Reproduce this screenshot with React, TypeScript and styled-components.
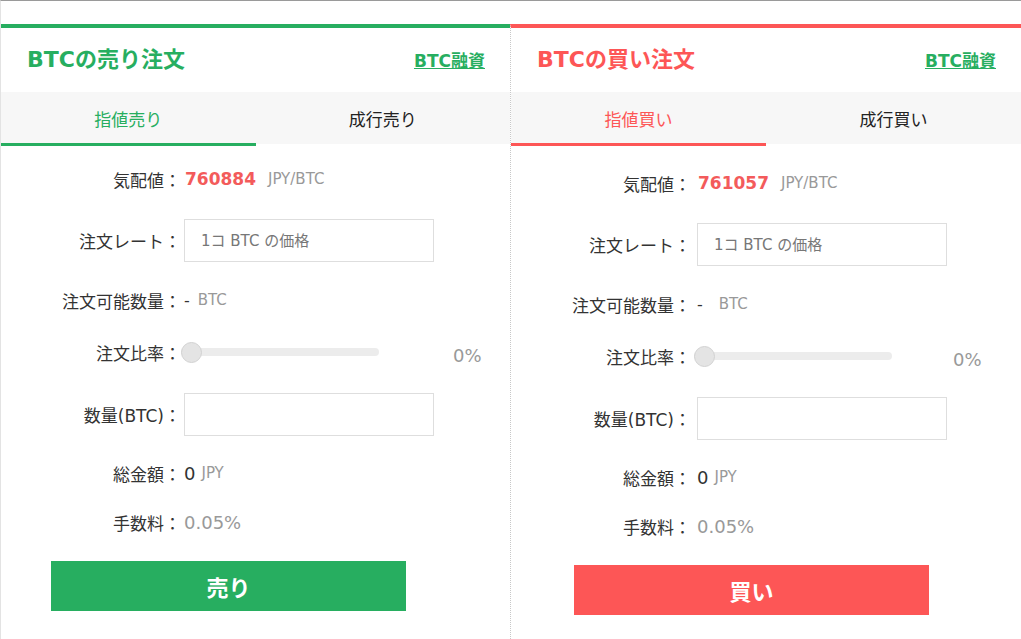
import React from 'react';
import styled, { createGlobalStyle, css } from 'styled-components';

const GREEN = '#27ae60';
const RED = '#fd5656';

type Side = 'sell' | 'buy';

const Global = createGlobalStyle`
  html, body { margin: 0; padding: 0; background: #fff; }
  body {
    font-family: "DejaVu Sans", "Noto Sans CJK JP", sans-serif;
    color: #333;
  }
  * { box-sizing: border-box; }
`;

const Page = styled.div`
  width: 1021px;
  height: 639px;
  overflow: hidden;
  border-top: 1px solid #9a9a9a;
  border-left: 1px solid #e3e3e3;
  padding-top: 23px;
  display: grid;
  grid-template-columns: 509px 511px;
`;

const Panel = styled.section<{ $side: Side }>`
  border-top: 4px solid ${(p) => (p.$side === 'sell' ? GREEN : RED)};
  ${(p) =>
    p.$side === 'buy' &&
    css`
      border-left: 1px dotted #c8c8c8;
    `}
  display: flex;
  flex-direction: column;
`;

const Header = styled.header`
  height: 64px;
  display: flex;
  align-items: center;
  justify-content: space-between;
  padding: 0 25px 7px 26px;
`;

const Title = styled.h2<{ $side: Side }>`
  margin: 0;
  font-size: 22px;
  font-weight: bold;
  color: ${(p) => (p.$side === 'sell' ? GREEN : RED)};
`;

const Link = styled.a`
  font-size: 17px;
  font-weight: bold;
  color: ${GREEN};
  text-decoration: underline;
  margin-top: 5px;
`;

const Tabs = styled.nav`
  height: 52px;
  display: flex;
  background: #f7f7f7;
`;

const Tab = styled.div<{ $active?: boolean; $side: Side }>`
  flex: 1;
  position: relative;
  display: flex;
  align-items: center;
  justify-content: center;
  font-size: 17px;
  color: ${(p) => (p.$active ? (p.$side === 'sell' ? GREEN : RED) : '#222')};
  ${(p) =>
    p.$active &&
    css`
      &::after {
        content: '';
        position: absolute;
        left: 0;
        right: 0;
        bottom: -2px;
        height: 3px;
        background: ${p.$side === 'sell' ? GREEN : RED};
      }
    `}
`;

const Form = styled.div<{ $top: number }>`
  padding-top: ${(p) => p.$top}px;
  display: flex;
  flex-direction: column;
`;

const Row = styled.div<{ $h: number }>`
  height: ${(p) => p.$h}px;
  display: flex;
  align-items: center;
`;

const Label = styled.span`
  width: 180px;
  flex-shrink: 0;
  text-align: right;
  font-size: 17px;
  color: #333;
  white-space: nowrap;
`;

const Field = styled.div<{ $gap: number }>`
  margin-left: ${(p) => p.$gap}px;
  display: flex;
  align-items: center;
`;

const Price = styled.span`
  font-size: 17px;
  font-weight: bold;
  color: #f35b5b;
  margin-left: 1px;
`;

const Unit = styled.span<{ $gap: number }>`
  font-size: 15px;
  color: #999;
  margin-left: ${(p) => p.$gap}px;
`;

const Value = styled.span<{ $muted?: boolean }>`
  font-size: 18px;
  color: ${(p) => (p.$muted ? '#999' : '#333')};
`;

const Dash = styled.span`
  font-size: 16px;
  color: #333;
`;

const TextInput = styled.input`
  width: 250px;
  height: 43px;
  border: 1px solid #dedede;
  padding: 0 16px;
  font-family: inherit;
  font-size: 15px;
  color: #333;
  outline: none;
  background: #fff;
  &::placeholder {
    color: #777;
  }
`;

const Slider = styled.div`
  position: relative;
  width: 198px;
  height: 8px;
  margin-left: -3px;
  border-radius: 4px;
  background: #ececec;
`;

const Thumb = styled.span`
  position: absolute;
  left: 0;
  top: 50%;
  width: 21px;
  height: 21px;
  margin-top: -10.5px;
  border-radius: 50%;
  background: #e4e4e4;
  border: 1px solid #d2d2d2;
`;

const Percent = styled.span<{ $gap: number }>`
  font-size: 18px;
  color: #999;
  margin-left: ${(p) => p.$gap}px;
  margin-top: 6px;
`;

const Submit = styled.button<{ $side: Side; $left: number }>`
  margin: 17px 0 0 ${(p) => p.$left}px;
  width: 355px;
  height: 50px;
  border: none;
  background: ${(p) => (p.$side === 'sell' ? GREEN : RED)};
  color: #fff;
  font-family: inherit;
  font-size: 22px;
  font-weight: bold;
  cursor: pointer;
`;

type Config = {
  side: Side;
  title: string;
  tabs: [string, string];
  price: string;
  button: string;
  top: number;
  fieldGap: number;
  btcGap: number;
  pctGap: number;
  btnLeft: number;
};

const panels: Config[] = [
  {
    side: 'sell',
    title: 'BTCの売り注文',
    tabs: ['指値売り', '成行売り'],
    price: '760884',
    button: '売り',
    top: 12,
    fieldGap: 3,
    btcGap: 8,
    pctGap: 74,
    btnLeft: 50,
  },
  {
    side: 'buy',
    title: 'BTCの買い注文',
    tabs: ['指値買い', '成行買い'],
    price: '761057',
    button: '買い',
    top: 16,
    fieldGap: 6,
    btcGap: 16,
    pctGap: 61,
    btnLeft: 63,
  },
];

function OrderPanel({ c }: { c: Config }) {
  return (
    <Panel $side={c.side}>
      <Header>
        <Title $side={c.side}>{c.title}</Title>
        <Link>BTC融資</Link>
      </Header>
      <Tabs>
        <Tab $side={c.side} $active>
          {c.tabs[0]}
        </Tab>
        <Tab $side={c.side}>{c.tabs[1]}</Tab>
      </Tabs>
      <Form $top={c.top}>
        <Row $h={46}>
          <Label>気配値：</Label>
          <Field $gap={c.fieldGap}>
            <Price>{c.price}</Price>
            <Unit $gap={12}>JPY/BTC</Unit>
          </Field>
        </Row>
        <Row $h={77}>
          <Label>注文レート：</Label>
          <Field $gap={c.fieldGap}>
            <TextInput placeholder="1コ BTC の価格" />
          </Field>
        </Row>
        <Row $h={42}>
          <Label>注文可能数量：</Label>
          <Field $gap={c.fieldGap}>
            <Dash>-</Dash>
            <Unit $gap={c.btcGap}>BTC</Unit>
          </Field>
        </Row>
        <Row $h={62}>
          <Label>注文比率：</Label>
          <Field $gap={c.fieldGap}>
            <Slider>
              <Thumb />
            </Slider>
            <Percent $gap={c.pctGap}>0%</Percent>
          </Field>
        </Row>
        <Row $h={63}>
          <Label>数量(BTC)：</Label>
          <Field $gap={c.fieldGap}>
            <TextInput />
          </Field>
        </Row>
        <Row $h={54}>
          <Label>総金額：</Label>
          <Field $gap={c.fieldGap}>
            <Value>0</Value>
            <Unit $gap={6}>JPY</Unit>
          </Field>
        </Row>
        <Row $h={44}>
          <Label>手数料：</Label>
          <Field $gap={c.fieldGap}>
            <Value $muted>0.05%</Value>
          </Field>
        </Row>
      </Form>
      <Submit $side={c.side} $left={c.btnLeft}>
        {c.button}
      </Submit>
    </Panel>
  );
}

export default function App() {
  return (
    <>
      <Global />
      <Page>
        {panels.map((c) => (
          <OrderPanel key={c.side} c={c} />
        ))}
      </Page>
    </>
  );
}
